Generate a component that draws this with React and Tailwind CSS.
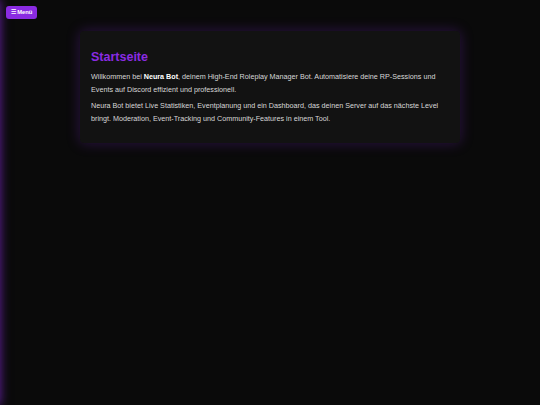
import React from "react";

export default function App() {
  return (
    <div className="relative min-h-[405px] w-full overflow-hidden bg-[#0a0a0a]" style={{ fontFamily: '"Liberation Sans", Arial, sans-serif' }}>
      <div className="fixed top-0 left-[-200px] h-full w-[200px] bg-[#111] shadow-[0_0_10px_rgba(138,43,226,0.7)]" />
      <button className="absolute left-[6px] top-[6px] flex h-[13px] w-[31px] items-center justify-center rounded-[3px] bg-[#8a2be2] text-[5.8px] font-bold text-white">
        ☰ Menü
      </button>
      <div className="flex justify-center pt-[31px]">
        <div className="w-[380px] rounded-[4px] bg-[#121212] px-[11px] pt-[18px] pb-[18px] shadow-[0_0_14px_rgba(138,43,226,0.28)]">
          <h1 className="text-[12.5px] font-bold leading-[16px] text-[#8a2be2]">Startseite</h1>
          <p className="mt-[6px] text-[7.2px] leading-[12.5px] text-[#d8d8d8]">
            Willkommen bei <b className="text-white">Neura Bot</b>, deinem High-End Roleplay Manager Bot. Automatisiere deine RP-Sessions und Events auf Discord effizient und professionell.
          </p>
          <p className="mt-[4px] text-[7.2px] leading-[12.5px] text-[#d8d8d8]">
            Neura Bot bietet Live Statistiken, Eventplanung und ein Dashboard, das deinen Server auf das nächste Level bringt. Moderation, Event-Tracking und Community-Features in einem Tool.
          </p>
        </div>
      </div>
    </div>
  );
}
